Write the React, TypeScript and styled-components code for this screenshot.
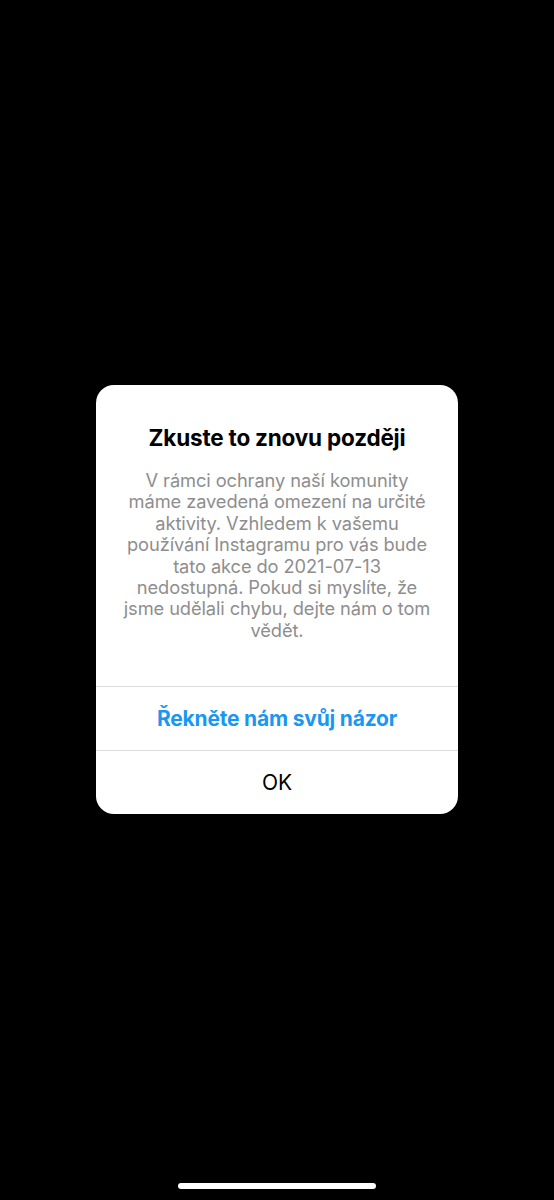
import React from 'react';
import styled, { createGlobalStyle } from 'styled-components';

const GlobalStyle = createGlobalStyle`
  html, body {
    margin: 0;
    padding: 0;
    background: #000;
  }
  body {
    font-family: Inter, "Noto Sans", "Liberation Sans", sans-serif;
    -webkit-font-smoothing: antialiased;
  }
`;

const Screen = styled.div`
  width: 554px;
  height: 1200px;
  background: #000;
  display: flex;
  flex-direction: column;
  align-items: center;
`;

const Overlay = styled.div`
  flex: 1;
  display: flex;
  align-items: center;
  justify-content: center;
  padding-top: 16px;
`;

const Dialog = styled.div`
  width: 362px;
  background: #fff;
  border-radius: 18px;
  overflow: hidden;
  display: flex;
  flex-direction: column;
`;

const Body = styled.div`
  padding: 39px 16px 45px;
  display: flex;
  flex-direction: column;
  align-items: center;
  text-align: center;
`;

const Title = styled.h2`
  margin: 0 0 18px;
  font-size: 22.5px;
  line-height: 28px;
  font-weight: 700;
  color: #000;
  letter-spacing: -0.2px;
`;

const Message = styled.p`
  margin: 0;
  font-size: 18.3px;
  line-height: 21.4px;
  color: #8e8e8e;
  letter-spacing: -0.1px;
  white-space: nowrap;
`;

const Action = styled.button<{ $primary?: boolean }>`
  height: 64px;
  border: 0;
  border-top: 1px solid #dbdbdb;
  background: transparent;
  font-family: inherit;
  font-size: 21px;
  font-weight: ${(p) => (p.$primary ? 700 : 400)};
  color: ${(p) => (p.$primary ? '#1a97f0' : '#000')};
  letter-spacing: -0.2px;
  padding: 0;
  cursor: pointer;
`;

const HomeBar = styled.div`
  width: 198px;
  height: 6px;
  border-radius: 3px;
  background: #fff;
  margin-bottom: 11px;
`;

const lines = [
  'V rámci ochrany naší komunity',
  'máme zavedená omezení na určité',
  'aktivity. Vzhledem k vašemu',
  'používání Instagramu pro vás bude',
  'tato akce do 2021-07-13',
  'nedostupná. Pokud si myslíte, že',
  'jsme udělali chybu, dejte nám o tom',
  'vědět.',
];

export default function App() {
  return (
    <Screen>
      <GlobalStyle />
      <Overlay>
        <Dialog>
          <Body>
            <Title>Zkuste to znovu později</Title>
            <Message>
              {lines.map((l, i) => (
                <React.Fragment key={i}>
                  {l}
                  {i < lines.length - 1 && <br />}
                </React.Fragment>
              ))}
            </Message>
          </Body>
          <Action $primary>Řekněte nám svůj názor</Action>
          <Action>OK</Action>
        </Dialog>
      </Overlay>
      <HomeBar />
    </Screen>
  );
}
